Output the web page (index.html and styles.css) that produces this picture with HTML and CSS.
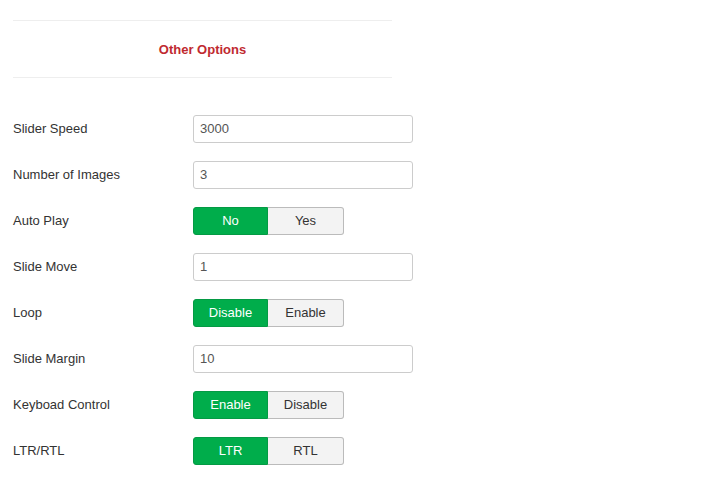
FILE: index.html
```html
<!DOCTYPE html>
<html>
<head>
<meta charset="utf-8">
<link rel="stylesheet" href="styles.css">
</head>
<body>
<div class="page">
  <div class="header"><h3 class="title">Other Options</h3></div>
  <div class="form">
    <div class="row"><label class="lbl">Slider Speed</label><div class="input">3000</div></div>
    <div class="row"><label class="lbl">Number of Images</label><div class="input">3</div></div>
    <div class="row"><label class="lbl">Auto Play</label><div class="group"><span class="btn on">No</span><span class="btn">Yes</span></div></div>
    <div class="row"><label class="lbl">Slide Move</label><div class="input">1</div></div>
    <div class="row"><label class="lbl">Loop</label><div class="group"><span class="btn on">Disable</span><span class="btn">Enable</span></div></div>
    <div class="row"><label class="lbl">Slide Margin</label><div class="input">10</div></div>
    <div class="row"><label class="lbl">Keyboad Control</label><div class="group"><span class="btn on">Enable</span><span class="btn">Disable</span></div></div>
    <div class="row"><label class="lbl">LTR/RTL</label><div class="group"><span class="btn on">LTR</span><span class="btn">RTL</span></div></div>
  </div>
</div>
</body>
</html>
```
FILE: styles.css
```css
html, body { margin: 0; padding: 0; background: #fff; }
body { font-family: "Liberation Sans", Arial, sans-serif; font-size: 13px; color: #333; }
.page { padding: 20px 0 0 13px; }
.header {
  width: 379px;
  height: 56px;
  border-top: 1px solid #eee;
  border-bottom: 1px solid #eee;
  display: flex;
  align-items: center;
  justify-content: center;
}
.title { margin: 0; font-size: 13px; font-weight: bold; color: #bf2a30; }
.form { display: flex; flex-direction: column; gap: 18px; padding-top: 37px; }
.row { display: flex; align-items: center; height: 28px; }
.lbl { width: 180px; padding-bottom: 2px; }
.input {
  box-sizing: border-box;
  width: 220px;
  height: 28px;
  border: 1px solid #ccc;
  border-radius: 3px;
  padding: 0 6px 1px;
  display: flex;
  align-items: center;
  color: #555;
}
.group { display: flex; height: 28px; }
.btn {
  box-sizing: border-box;
  width: 76px;
  height: 28px;
  padding-bottom: 1px;
  display: flex;
  align-items: center;
  justify-content: center;
  background: #f3f3f3;
  border: 1px solid #bbb;
  border-left: none;
  border-radius: 0 3px 3px 0;
  color: #333;
}
.btn.on {
  width: 75px;
  background: #00ad4b;
  border: 1px solid #049a44;
  border-radius: 3px 0 0 3px;
  color: #fff;
}
```
